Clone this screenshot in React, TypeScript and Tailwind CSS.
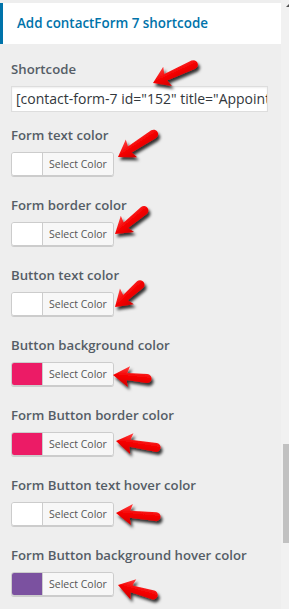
import React from "react";

const items: { label: string; swatch: string }[] = [
  { label: "Form text color", swatch: "bg-white" },
  { label: "Form border color", swatch: "bg-white" },
  { label: "Button text color", swatch: "bg-white" },
  { label: "Button background color", swatch: "bg-[#ec1b66]" },
  { label: "Form Button border color", swatch: "bg-[#ec1b66]" },
  { label: "Form Button text hover color", swatch: "bg-white" },
  { label: "Form Button background hover color", swatch: "bg-[#7b51a0]" },
];

type Arr = { tip: [number, number]; tail: [number, number] };
const arrows: Arr[] = [
  { tip: [153, 83], tail: [197, 63] },
  { tip: [118, 157], tail: [157, 132] },
  { tip: [115, 234], tail: [147, 208] },
  { tip: [115, 307], tail: [143, 282] },
  { tip: [113, 375], tail: [151, 379] },
  { tip: [116, 441], tail: [160, 448] },
  { tip: [116, 513], tail: [160, 517] },
  { tip: [118, 585], tail: [157, 596] },
];

function arrowPath(L: number) {
  const hl = 16;
  const hw = 10.5;
  const s0 = 3.5;
  const s1 = 4.5;
  return `M0,0 L${hl},${-hw} L${hl - 2},${-s0} L${L},${-s1} A${s1},${s1} 0 0 1 ${L},${s1} L${hl - 2},${s0} L${hl},${hw} Z`;
}

function Arrows() {
  return (
    <svg
      className="absolute left-0 top-0 pointer-events-none"
      width={289}
      height={609}
      viewBox="0 0 289 609"
    >
      <defs>
        <filter id="sh" x="-20%" y="-20%" width="140%" height="140%">
          <feDropShadow dx="2" dy="3" stdDeviation="1.6" floodColor="#000" floodOpacity="0.8" />
        </filter>
        <linearGradient id="rg" x1="0" y1="0" x2="0" y2="1">
          <stop offset="0" stopColor="#ff4040" />
          <stop offset="0.5" stopColor="#f40000" />
          <stop offset="1" stopColor="#d10000" />
        </linearGradient>
      </defs>
      <g filter="url(#sh)">
        {arrows.map((a, i) => {
          const dx = a.tail[0] - a.tip[0];
          const dy = a.tail[1] - a.tip[1];
          const L = Math.sqrt(dx * dx + dy * dy) - 4;
          const ang = (Math.atan2(dy, dx) * 180) / Math.PI;
          return (
            <g key={i} transform={`translate(${a.tip[0]},${a.tip[1]}) rotate(${ang})`}>
              <path d={arrowPath(L)} fill="url(#rg)" />
            </g>
          );
        })}
      </g>
    </svg>
  );
}

function ColorButton({ swatch }: { swatch: string }) {
  return (
    <div className="flex w-[103px] h-[24px] border border-[#cccccc] rounded-[3px] overflow-hidden shadow-[0_1px_0_#cccccc]">
      <div className={`w-[30px] h-full ${swatch}`} />
      <div className="flex-1 border-l border-[#cccccc] bg-[#f7f7f7] pl-[6px] text-[10.5px] leading-[22px] text-[#555555] whitespace-nowrap">
        Select Color
      </div>
    </div>
  );
}

export default function App() {
  return (
    <div
      className="relative w-[289px] h-[609px] overflow-hidden bg-[#eeeeee] flex"
      style={{ fontFamily: '"Open Sans", "Noto Sans", sans-serif' }}
    >
      <div className="w-[281px] shrink-0 flex flex-col pt-[3px]">
        <div className="shrink-0 h-[41px] bg-white border-l-[3px] border-[#0073aa] pl-[14px] flex items-center">
          <span className="text-[13.4px] font-semibold text-[#0073aa] whitespace-nowrap">
            Add contactForm 7 shortcode
          </span>
        </div>
        <div className="shrink-0 px-[11px] pt-[15px]">
          <div className="h-[20px] leading-[20px] text-[13.2px] font-semibold text-[#555d66] mb-[7px]">
            Shortcode
          </div>
          <div className="w-[257px] h-[26px] bg-white border border-[#dddddd] shadow-[inset_0_1px_2px_rgba(0,0,0,0.07)] overflow-hidden pl-[4px] text-[14px] leading-[24px] text-[#32373c] whitespace-nowrap mb-[13px]">
            [contact-form-7 id="152" title="Appointment"]
          </div>
          {items.map((it) => (
            <div key={it.label} className="h-[70px]">
              <div className="h-[20px] leading-[20px] text-[13.2px] font-semibold text-[#555d66] mb-[7px] whitespace-nowrap">
                {it.label}
              </div>
              <ColorButton swatch={it.swatch} />
            </div>
          ))}
        </div>
      </div>
      <div className="w-[8px] shrink-0 bg-[#f1f1f1] flex flex-col items-end">
        <div className="mt-[4px] w-0 h-0 border-l-[3px] border-l-transparent border-b-[3px] border-b-[#505050]" />
        <div className="mt-[437px] w-[6px] h-[99px] bg-[#c1c1c1]" />
      </div>
      <Arrows />
    </div>
  );
}
